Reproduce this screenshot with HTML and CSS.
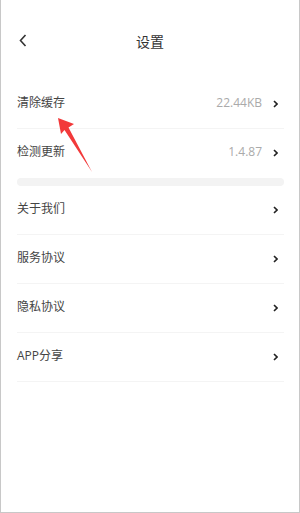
FILE: index.html
```html
<!DOCTYPE html>
<html lang="zh-CN">
  <head>
    <meta charset="UTF-8" />
    <title>设置</title>
    <link rel="stylesheet" href="styles.css">
  </head>
  <body>
    <div class="page">
      <div class="nav-bar">
        <a class="back-btn">
          <svg width="8" height="13" viewBox="0 0 8 13">
            <path d="M6.5 1 L1.5 6.5 L6.5 12" fill="none" stroke="#333" stroke-width="1.6" />
          </svg>
        </a>
        <h1 class="nav-title">设置</h1>
      </div>

      <div class="setting-list">
        <div class="setting-item">
          <span class="item-label">清除缓存</span>
          <span class="item-value">22.44KB</span>
          <svg class="item-arrow" width="5" height="8" viewBox="0 0 5 8">
            <path d="M1 1 L4 4 L1 7" fill="none" stroke="#222" stroke-width="1.6" />
          </svg>
        </div>
        <div class="setting-item no-border">
          <span class="item-label">检测更新</span>
          <span class="item-value">1.4.87</span>
          <svg class="item-arrow" width="5" height="8" viewBox="0 0 5 8">
            <path d="M1 1 L4 4 L1 7" fill="none" stroke="#222" stroke-width="1.6" />
          </svg>
        </div>

        <div class="divider-bar"></div>

        <div class="setting-item">
          <span class="item-label">关于我们</span>
          <svg class="item-arrow" width="5" height="8" viewBox="0 0 5 8">
            <path d="M1 1 L4 4 L1 7" fill="none" stroke="#222" stroke-width="1.6" />
          </svg>
        </div>
        <div class="setting-item">
          <span class="item-label">服务协议</span>
          <svg class="item-arrow" width="5" height="8" viewBox="0 0 5 8">
            <path d="M1 1 L4 4 L1 7" fill="none" stroke="#222" stroke-width="1.6" />
          </svg>
        </div>
        <div class="setting-item">
          <span class="item-label">隐私协议</span>
          <svg class="item-arrow" width="5" height="8" viewBox="0 0 5 8">
            <path d="M1 1 L4 4 L1 7" fill="none" stroke="#222" stroke-width="1.6" />
          </svg>
        </div>
        <div class="setting-item">
          <span class="item-label">APP分享</span>
          <svg class="item-arrow" width="5" height="8" viewBox="0 0 5 8">
            <path d="M1 1 L4 4 L1 7" fill="none" stroke="#222" stroke-width="1.6" />
          </svg>
        </div>
      </div>

      <!-- red pointer drawn over the list -->
      <svg class="pointer" width="300" height="200" viewBox="0 0 300 200">
        <polygon points="57,118 73,124 67.5,127.5 91,172 63.5,130 60,134" fill="#f2393a" />
      </svg>
    </div>
  </body>
</html>
```

FILE: styles.css
```css
body {
  margin: 0;
  padding: 0;
  font-family: "Open Sans", "Noto Sans CJK SC", sans-serif;
  background-color: #ffffff;
}

.page {
  position: relative;
  width: 300px;
  height: 513px;
  box-sizing: border-box;
  padding-top: 20px;
  border: 1px solid #c8c8c8;
  border-top: none;
  background-color: #fff;
}

.nav-bar {
  display: flex;
  align-items: center;
  justify-content: center;
  position: relative;
  height: 44px;
}

.back-btn {
  position: absolute;
  left: 18px;
  top: 14px;
  display: flex;
}

.nav-title {
  margin: 0;
  margin-top: -2px;
  font-size: 14px;
  font-weight: normal;
  color: #333;
}

.setting-list {
  margin-top: 16px;
  padding: 0 15px 0 16px;
}

.setting-item {
  display: flex;
  align-items: center;
  height: 48px;
  border-bottom: 1px solid #f4f4f4;
}

.setting-item.no-border {
  border-bottom: none;
}

.item-label {
  flex: 1;
  font-size: 12px;
  color: #444;
  margin-top: -4px;
}

.item-value {
  font-size: 12px;
  color: #aaa;
  margin-right: 11px;
  margin-top: -4px;
}

.item-arrow {
  margin-right: 6px;
}

.divider-bar {
  height: 8px;
  margin-top: 1px;
  border-radius: 4px;
  background-color: #f3f3f3;
}

.pointer {
  position: absolute;
  left: 0;
  top: 0;
}
```
